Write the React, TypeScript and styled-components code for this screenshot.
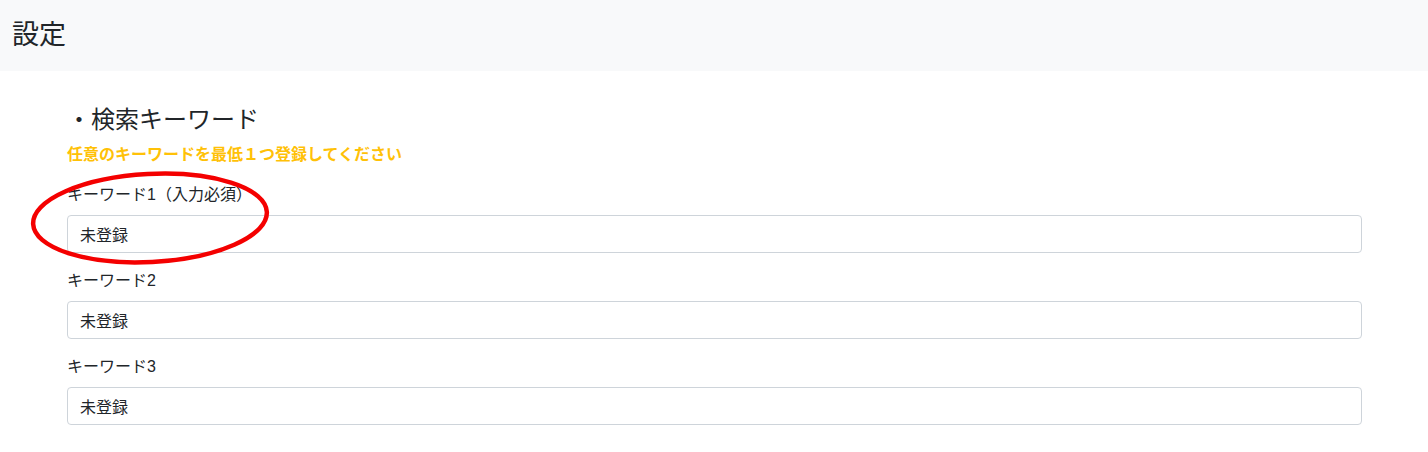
import React from "react";
import styled, { createGlobalStyle } from "styled-components";

const GlobalStyle = createGlobalStyle`
  *, *::before, *::after { box-sizing: border-box; }
  body {
    margin: 0;
    background: #ffffff;
    color: #212529;
    font-family: "Liberation Sans", "Noto Sans CJK JP", sans-serif;
    font-size: 16px;
    line-height: 1.5;
  }
`;

const Header = styled.header`
  height: 71px;
  background: #f8f9fa;
  display: flex;
  align-items: center;
  padding: 0 12px;
`;

const PageTitle = styled.h1`
  margin: 0;
  font-size: 27px;
  font-weight: 400;
  line-height: 1.2;
  color: #212529;
`;

const Container = styled.main`
  max-width: 1320px;
  margin: 0 auto;
  padding: 35px 12px 10px 13px;
`;

const SectionTitle = styled.h4`
  margin: 0 0 8px;
  font-size: 24px;
  font-weight: 400;
  line-height: 1.2;
  color: #212529;
`;

const Notice = styled.p`
  margin: 0 0 16px;
  font-size: 16px;
  font-weight: 700;
  line-height: 24px;
  color: #ffc107;
`;

const FieldGroup = styled.div`
  position: relative;
  margin-bottom: 16px;
  display: flex;
  flex-direction: column;
`;

const Label = styled.label`
  display: block;
  margin-bottom: 8px;
  font-size: 16px;
  line-height: 24px;
  color: #212529;
`;

const Input = styled.input`
  display: block;
  width: 100%;
  height: 38px;
  padding: 6px 12px;
  font-family: "Liberation Sans", "Noto Sans CJK JP", sans-serif;
  font-size: 16px;
  line-height: 1.5;
  color: #212529;
  background: #fff;
  border: 1px solid #ced4da;
  border-radius: 4px;
  outline: none;
`;

const Annotation = styled.svg`
  position: absolute;
  left: -38px;
  top: -14px;
  width: 244px;
  height: 96px;
  overflow: visible;
  pointer-events: none;
`;

const fields = [
  { id: "kw1", label: "キーワード1（入力必須）", marked: true },
  { id: "kw2", label: "キーワード2", marked: false },
  { id: "kw3", label: "キーワード3", marked: false },
];

export default function App() {
  return (
    <>
      <GlobalStyle />
      <Header>
        <PageTitle>設定</PageTitle>
      </Header>
      <Container>
        <SectionTitle>・検索キーワード</SectionTitle>
        <Notice>任意のキーワードを最低１つ登録してください</Notice>
        {fields.map((f) => (
          <FieldGroup key={f.id}>
            <Label htmlFor={f.id}>{f.label}</Label>
            <Input id={f.id} defaultValue="未登録" readOnly />
            {f.marked && (
              <Annotation viewBox="0 0 244 96">
                <ellipse
                  cx="121"
                  cy="49"
                  rx="117"
                  ry="44"
                  fill="none"
                  stroke="#f40000"
                  strokeWidth="4.5"
                  transform="rotate(-3 121 49)"
                />
              </Annotation>
            )}
          </FieldGroup>
        ))}
      </Container>
    </>
  );
}
